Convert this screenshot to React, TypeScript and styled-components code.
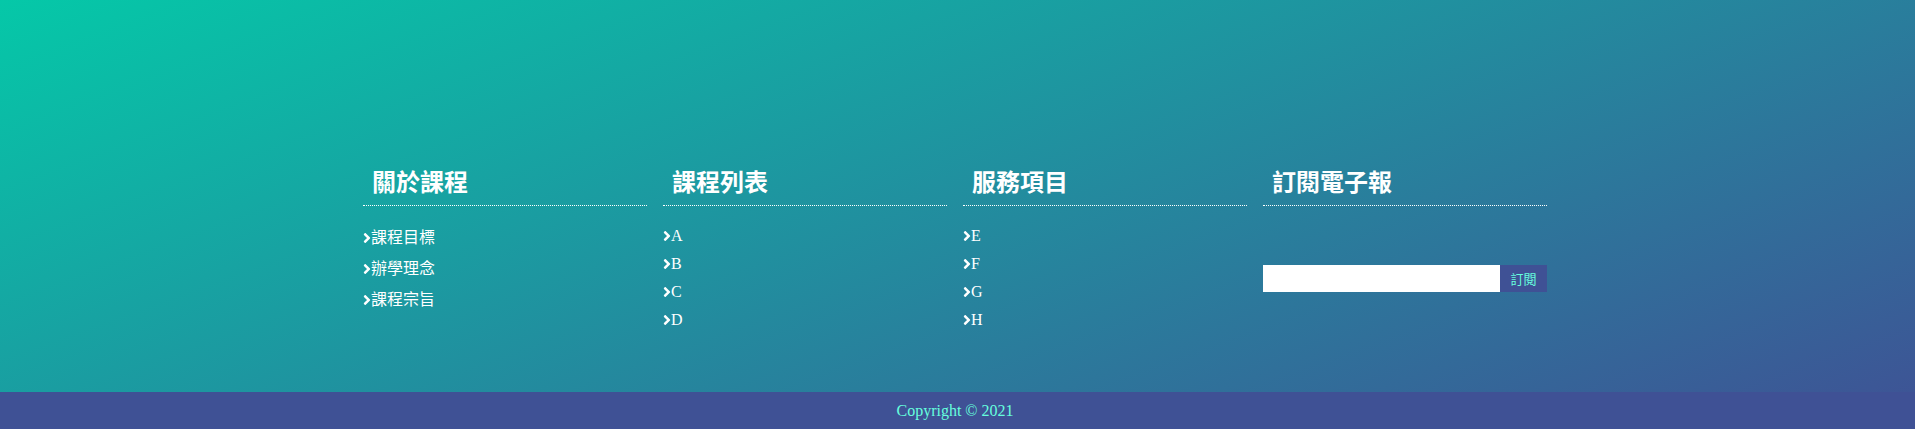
import React from "react";
import styled, { createGlobalStyle } from "styled-components";

const GlobalStyle = createGlobalStyle`
  * { box-sizing: border-box; }
  body { margin: 0; font-family: "Liberation Serif", "Noto Sans CJK TC", serif; }
`;

const Footer = styled.footer`
  background: linear-gradient(160deg, #05c8a8, #3f5195);
`;

const Main = styled.div`
  padding: 165px 5px 58px 0;
`;

const Container = styled.div`
  max-width: 1200px;
  margin: 0 auto;
  display: flex;
`;

const Column = styled.section`
  flex: 1;
  padding: 0 8px;
`;

const Heading = styled.h3`
  margin: 0 0 16px;
  padding: 0 0 4px 9px;
  border-bottom: 1px dotted #fff;
  color: #fff;
  font-size: 24px;
  line-height: 36px;
  font-weight: 700;
`;

const List = styled.ul<{ $row: number }>`
  margin: 0;
  padding: 0;
  list-style: none;
  line-height: ${(p) => p.$row}px;
`;

const Link = styled.a`
  display: flex;
  align-items: center;
  color: #fff;
  text-decoration: none;
  font-size: 16px;
`;

const Arrow = styled.svg`
  width: 8px;
  height: 16px;
  fill: currentColor;
`;

const Form = styled.form`
  display: flex;
  margin-top: 59px;
`;

const Email = styled.input`
  flex: 1;
  min-width: 0;
  height: 27px;
  border: 0;
  padding: 0 8px;
  background: #fff;
`;

const Submit = styled.button`
  width: 47px;
  border: 0;
  padding: 0;
  background: #3f5195;
  color: #66ffdd;
  font: 13px "Liberation Sans", "Noto Sans CJK TC", sans-serif;
`;

const Copyright = styled.div`
  padding-right: 5px;
  background: #3f5195;
  color: #66ffdd;
  text-align: center;
  font-size: 16px;
  line-height: 37px;
`;

const groups = [
  { title: "關於課程", row: 31, items: ["課程目標", "辦學理念", "課程宗旨"] },
  { title: "課程列表", row: 28, items: ["A", "B", "C", "D"] },
  { title: "服務項目", row: 28, items: ["E", "F", "G", "H"] },
];

export default function App() {
  return (
    <>
      <GlobalStyle />
      <Footer>
        <Main>
          <Container>
            {groups.map((g) => (
              <Column key={g.title}>
                <Heading>{g.title}</Heading>
                <List $row={g.row}>
                  {g.items.map((item) => (
                    <li key={item}>
                      <Link href="#">
                        <Arrow viewBox="0 0 256 512" aria-hidden="true">
                          <path d="M224.3 273l-136 136c-9.4 9.4-24.6 9.4-33.9 0l-22.6-22.6c-9.4-9.4-9.4-24.6 0-33.9l96.4-96.4-96.4-96.4c-9.4-9.4-9.4-24.6 0-33.9L54.3 103c9.4-9.4 24.6-9.4 33.9 0l136 136c9.5 9.4 9.5 24.6.1 34z" />
                        </Arrow>
                        {item}
                      </Link>
                    </li>
                  ))}
                </List>
              </Column>
            ))}
            <Column>
              <Heading>訂閱電子報</Heading>
              <Form>
                <Email type="email" aria-label="訂閱電子報" />
                <Submit type="button">訂閱</Submit>
              </Form>
            </Column>
          </Container>
        </Main>
        <Copyright>Copyright © 2021</Copyright>
      </Footer>
    </>
  );
}
